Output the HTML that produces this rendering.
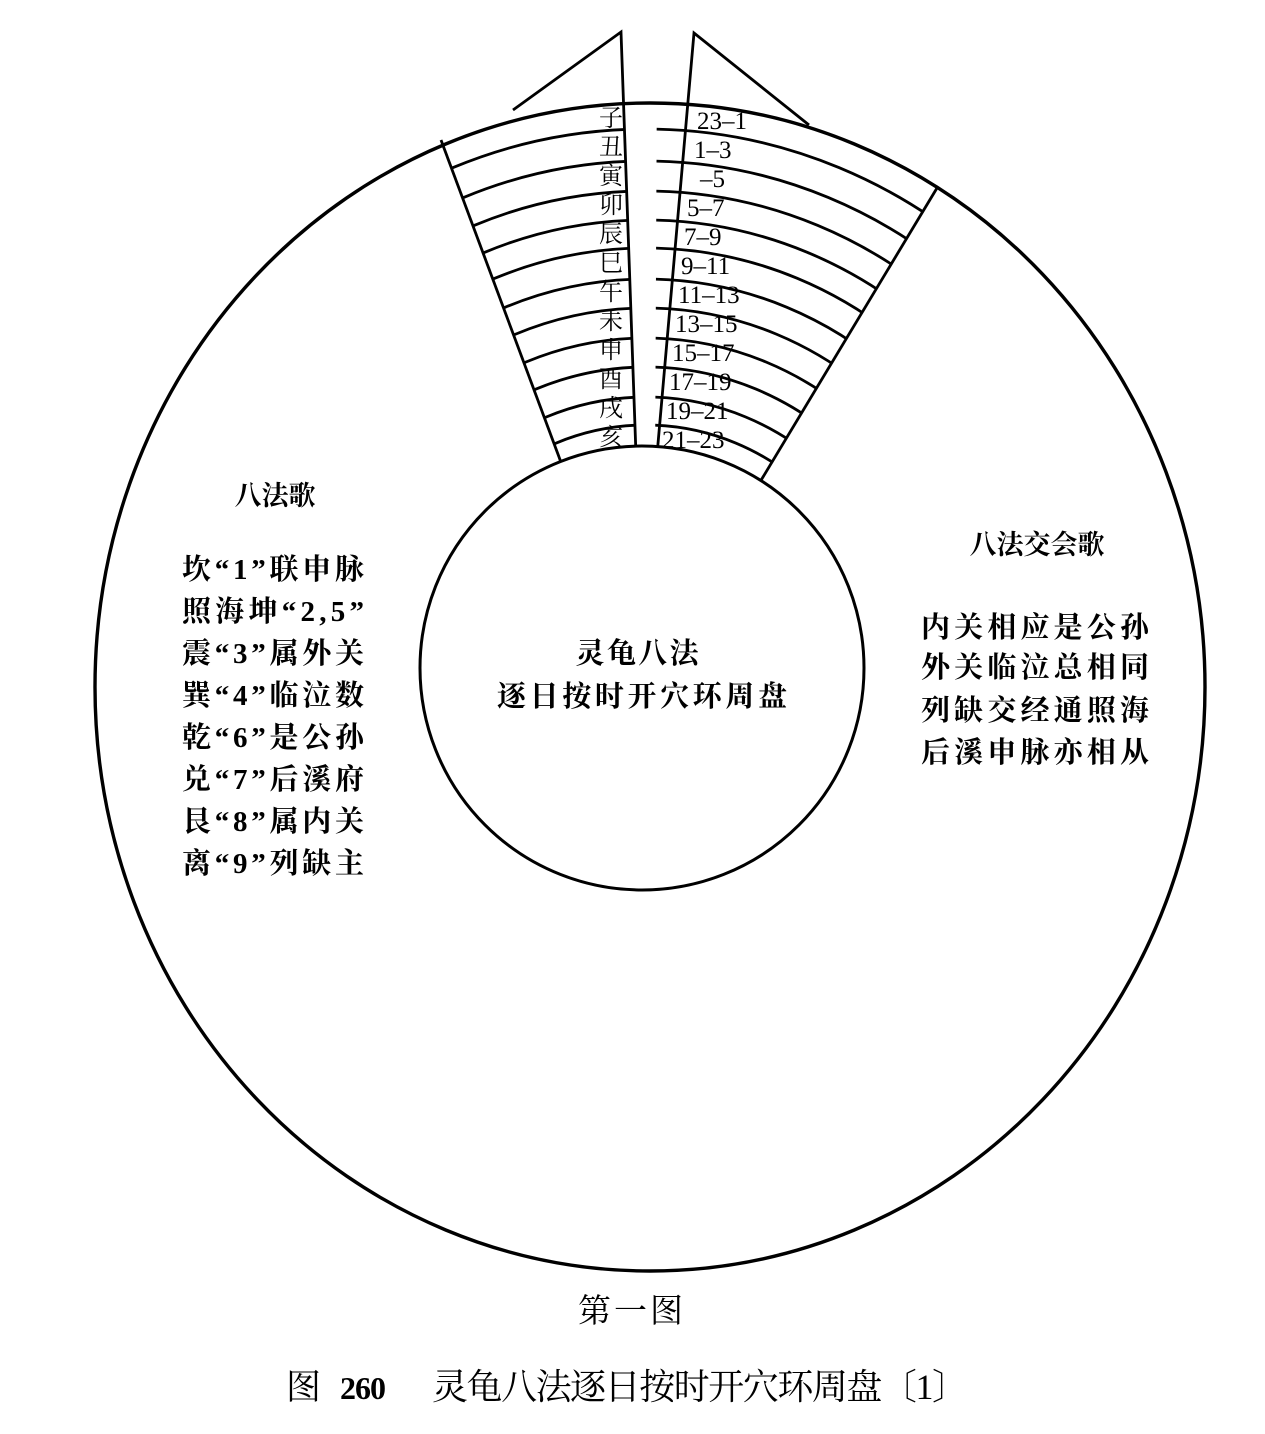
<!DOCTYPE html>
<html><head><meta charset="utf-8"><style>
html,body{margin:0;padding:0;background:#fff}
svg{display:block}
text{font-family:"Liberation Serif","Noto Serif CJK SC","Noto Sans CJK SC",serif;fill:#000}
.b{font-family:"Liberation Serif","Noto Sans CJK SC",sans-serif;font-weight:bold}
</style></head><body>
<svg width="1265" height="1434" viewBox="0 0 1265 1434" xmlns="http://www.w3.org/2000/svg">
<defs>
<clipPath id="cl"><polygon points="411,60 622,60 636,480 567,480"/></clipPath>
<clipPath id="cr"><polygon points="657,60 1014,60 761,480 655,480"/></clipPath>
</defs>
<g fill="none" stroke="#000" stroke-width="2.8">
<ellipse cx="650" cy="687" rx="555" ry="584" stroke-width="3.4"/>
<g clip-path="url(#cl)">
<ellipse cx="646" cy="680" rx="525" ry="551"/><ellipse cx="646" cy="680" rx="495" ry="519"/><ellipse cx="646" cy="680" rx="466" ry="489"/><ellipse cx="646" cy="680" rx="438" ry="460"/><ellipse cx="646" cy="680" rx="411" ry="432"/><ellipse cx="646" cy="680" rx="382" ry="401"/><ellipse cx="646" cy="680" rx="354" ry="372"/><ellipse cx="646" cy="680" rx="326" ry="342"/><ellipse cx="646" cy="680" rx="298" ry="313"/><ellipse cx="646" cy="680" rx="270" ry="283"/><ellipse cx="646" cy="680" rx="243" ry="255"/>
</g>
<g clip-path="url(#cr)">
<ellipse cx="646" cy="680" rx="525" ry="551"/><ellipse cx="646" cy="680" rx="495" ry="519"/><ellipse cx="646" cy="680" rx="466" ry="489"/><ellipse cx="646" cy="680" rx="438" ry="460"/><ellipse cx="646" cy="680" rx="411" ry="432"/><ellipse cx="646" cy="680" rx="382" ry="401"/><ellipse cx="646" cy="680" rx="354" ry="372"/><ellipse cx="646" cy="680" rx="326" ry="342"/><ellipse cx="646" cy="680" rx="298" ry="313"/><ellipse cx="646" cy="680" rx="270" ry="283"/><ellipse cx="646" cy="680" rx="243" ry="255"/>
</g>
<line x1="441" y1="140" x2="562" y2="465"/>
<line x1="937" y1="188" x2="760" y2="482"/>
<polyline points="513,110 621,32 636,455"/>
<polyline points="809,125 694,33 657,455"/>
<circle cx="642" cy="668" r="222" fill="#fff" stroke-width="3"/>
</g>
<g font-size="24" text-anchor="end">
<text x="623" y="126">子</text><text x="623" y="155">丑</text><text x="623" y="184">寅</text><text x="623" y="213">卯</text><text x="623" y="242">辰</text><text x="623" y="271">巳</text><text x="623" y="300">午</text><text x="623" y="329">未</text><text x="623" y="358">申</text><text x="623" y="387">酉</text><text x="623" y="416">戌</text><text x="623" y="445">亥</text>
</g>
<g font-size="25">
<text x="697" y="129">23–1</text><text x="694" y="158">1–3</text><text x="700" y="187">–5</text><text x="687" y="216">5–7</text><text x="684" y="245">7–9</text><text x="681" y="274">9–11</text><text x="678" y="303">11–13</text><text x="675" y="332">13–15</text><text x="672" y="361">15–17</text><text x="669" y="390">17–19</text><text x="666" y="419">19–21</text><text x="662" y="448">21–23</text>
</g>
<g class="b" font-size="29">
<text x="275" y="505" text-anchor="middle" font-size="27">八法歌</text>
<text x="182" y="579" textLength="182">坎“1”联申脉</text>
<text x="182" y="621" textLength="182">照海坤“2,5”</text>
<text x="182" y="663" textLength="182">震“3”属外关</text>
<text x="182" y="705" textLength="182">巽“4”临泣数</text>
<text x="182" y="747" textLength="182">乾“6”是公孙</text>
<text x="182" y="789" textLength="182">兑“7”后溪府</text>
<text x="182" y="831" textLength="182">艮“8”属内关</text>
<text x="182" y="873" textLength="182">离“9”列缺主</text>
<text x="1037" y="554" text-anchor="middle" font-size="27">八法交会歌</text>
<text x="921" y="637" textLength="228">内关相应是公孙</text>
<text x="921" y="677" textLength="228">外关临泣总相同</text>
<text x="921" y="720" textLength="228">列缺交经通照海</text>
<text x="921" y="762" textLength="228">后溪申脉亦相从</text>
<text x="637" y="663" text-anchor="middle" textLength="123">灵龟八法</text>
<text x="497" y="706" textLength="290">逐日按时开穴环周盘</text>
</g>
<text x="578" y="1322" font-size="33" textLength="105">第一图</text>
<text x="286" y="1399" font-size="35">图</text>
<text x="340" y="1399" font-size="32" font-weight="bold" textLength="46">260</text>
<text x="432" y="1399" font-size="36" textLength="536">灵龟八法逐日按时开穴环周盘〔1〕</text>
</svg>
</body></html>
